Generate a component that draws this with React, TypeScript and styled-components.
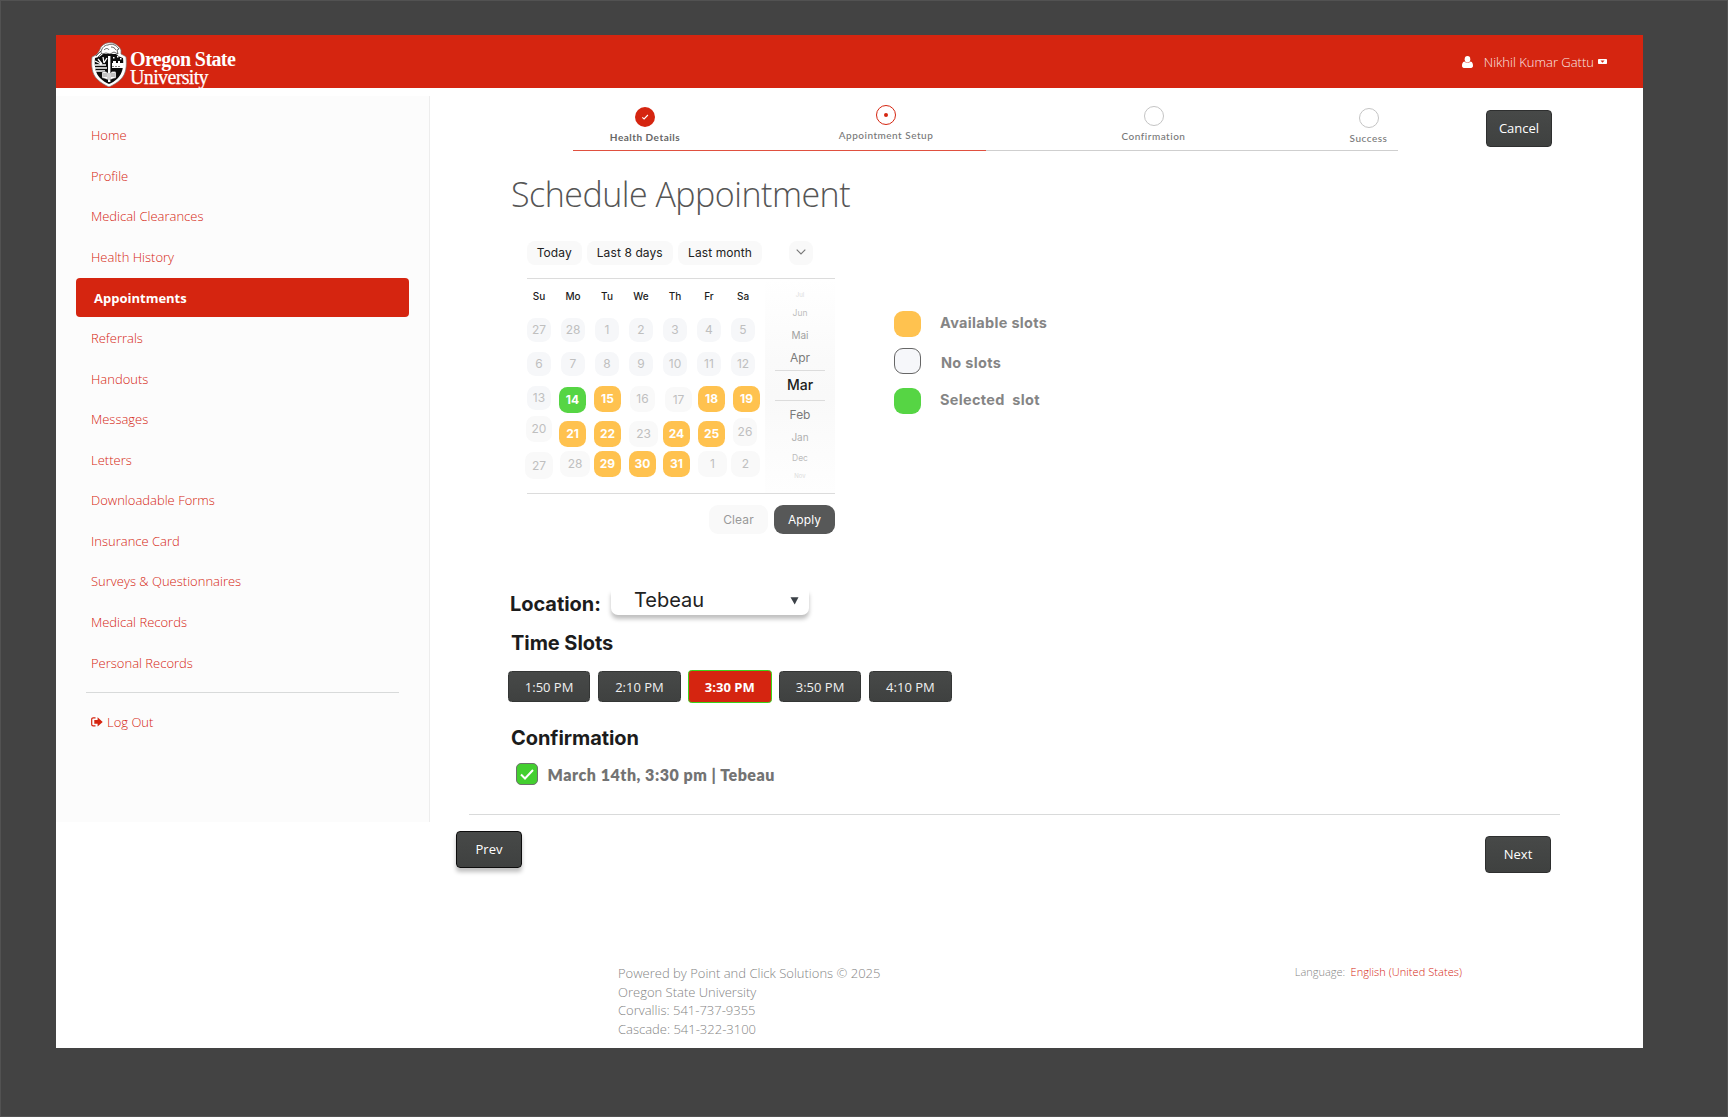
import React from "react";
import styled, { createGlobalStyle, css } from "styled-components";

const RED = "#d52510";
const OPEN = '"Open Sans", "Noto Sans", sans-serif';
const INTER = 'Inter, "Liberation Sans", sans-serif';

const GlobalStyle = createGlobalStyle`
  * { box-sizing: border-box; }
  html, body { margin: 0; padding: 0; background: #434343; }
  body { height: 1117px; overflow: hidden; font-family: ${OPEN}; }
  button { font: inherit; margin: 0; padding: 0; border: 0; }
`;

const Backdrop = styled.div`
  width: 1728px;
  height: 1117px;
  padding: 34px 84px 0 55px;
  background: #434343;
  border: 1px solid #525252;
`;

const Page = styled.div`
  width: 1587px;
  height: 1013px;
  background: #fff;
  display: flex;
  flex-direction: column;
`;

/* Header */

const Header = styled.header`
  height: 53px;
  flex: none;
  padding: 0 36px 0 35px;
  background: ${RED};
  display: flex;
  justify-content: space-between;
  align-items: flex-start;
`;

const Brand = styled.div`
  display: flex;
  padding-top: 7px;
`;

const Wordmark = styled.div`
  margin: 9px 0 -10px 3px;
  color: #fff;
  font-family: "Liberation Serif", serif;
  font-size: 20px;
  line-height: 17.5px;
  white-space: nowrap;
`;

const WordTop = styled.div`
  font-weight: 700;
  letter-spacing: -0.6px;
`;

const WordBottom = styled.div`
  letter-spacing: -0.65px;
  -webkit-text-stroke: 0.25px #fff;
`;

const User = styled.div`
  display: flex;
  align-items: center;
  height: 53px;
  color: #fff;
  font-size: 13px;
  font-weight: 300;
  white-space: nowrap;
`;

const UserName = styled.span`
  margin: 0 4px 0 11px;
  padding-top: 1px;
  opacity: 0.9;
`;

/* Sidebar */

const Body = styled.div`
  display: flex;
  flex: 1;
`;

const Sidebar = styled.aside`
  width: 374px;
  height: 726px;
  margin-top: 8px;
  padding: 19px 20px 0 20px;
  flex: none;
  background: #fcfcfc;
  border-right: 1px solid #ededed;
`;

const NavItem = styled.a<{ $active?: boolean }>`
  display: flex;
  align-items: center;
  height: 40.57px;
  padding-left: 15px;
  color: ${RED};
  font-size: 13px;
  font-weight: 300;
  white-space: nowrap;
  ${(p) =>
    p.$active &&
    css`
      height: 38.57px;
      margin: 1px 0;
      width: 333px;
      padding-left: 18px;
      background: ${RED};
      border-radius: 4px;
      color: #fff;
      font-weight: 700;
    `}
`;

const NavRule = styled.div`
  width: 313px;
  height: 1px;
  margin: 9px 0 9px 10px;
  background: #d8dada;
`;

const LogOut = styled(NavItem)`
  gap: 4px;
`;

/* Main column */

const Main = styled.main`
  flex: 1;
  display: flex;
  flex-direction: column;
`;

const TopRow = styled.div`
  display: flex;
  height: 64px;
`;

const Stepper = styled.div`
  width: 825px;
  margin-left: 143px;
  display: flex;
  flex-direction: column;
`;

const Steps = styled.div`
  display: flex;
  align-items: flex-start;
  height: 62px;
`;

const Step = styled.div<{ $gap: number; $width: number; $top: number }>`
  width: ${(p) => p.$width}px;
  margin-left: ${(p) => p.$gap}px;
  padding-top: ${(p) => p.$top}px;
  display: flex;
  flex-direction: column;
  align-items: center;
  gap: 3px;
  svg { display: block; }
`;

const StepLabel = styled.span<{ $bold?: boolean }>`
  font-family: Lato, sans-serif;
  font-size: 10px;
  line-height: 14px;
  letter-spacing: 0.5px;
  font-weight: ${(p) => (p.$bold ? 700 : 500)};
  color: ${(p) => (p.$bold ? "#666" : "#777")};
  white-space: nowrap;
`;

const Progress = styled.div`
  display: flex;
  height: 1px;
  background: #cfcfcf;
`;

const ProgressDone = styled.div`
  width: 413px;
  background: #e0503f;
`;

const DarkButton = styled.button<{ $raised?: boolean }>`
  width: 66px;
  height: 37px;
  padding-bottom: 1px;
  border: 1px solid ${(p) => (p.$raised ? "#0d0d0d" : "#2e2f2f")};
  border-radius: 4px;
  background: linear-gradient(#474948, #3f4140);
  color: #fff;
  font-size: 13px;
  box-shadow: ${(p) => (p.$raised ? "0 4px 4px rgba(0,0,0,0.25)" : "none")};
`;

const CancelButton = styled(DarkButton)`
  margin: 22px 0 0 88px;
`;

const Title = styled.h1`
  margin: 18px 0 0 81px;
  font-size: 34px;
  line-height: 48px;
  font-weight: 300;
  letter-spacing: -0.5px;
  color: #555;
  white-space: nowrap;
`;

/* Calendar */

const CalendarRow = styled.section`
  display: flex;
  height: 293px;
  margin: 23px 0 0 97px;
`;

const Calendar = styled.div`
  width: 308px;
  font-family: ${INTER};
`;

const Chips = styled.div`
  display: flex;
  gap: 5.5px;
  height: 24px;
  margin-bottom: 13px;
`;

const Chip = styled.button<{ $width: number; $push?: boolean }>`
  width: ${(p) => p.$width}px;
  margin-left: ${(p) => (p.$push ? 21 : 0)}px;
  padding-bottom: 1.5px;
  border-radius: 8px;
  background: #f9f9f9;
  color: #222;
  font-size: 12px;
  letter-spacing: 0.1px;
  display: flex;
  align-items: center;
  justify-content: center;
  white-space: nowrap;
`;

const CalendarBody = styled.div`
  display: flex;
  height: 216px;
  border-top: 1px solid #dcdcdc;
  border-bottom: 1px solid #dcdcdc;
`;

const Days = styled.div`
  width: 238px;
`;

const Weekdays = styled.div`
  display: flex;
  gap: 10px;
  padding-top: 10px;
  margin-bottom: 15px;
`;

const Weekday = styled.span`
  width: 24px;
  text-align: center;
  font-size: 10px;
  line-height: 14px;
  font-weight: 500;
  color: #1c1c1c;
`;

const Week = styled.div<{ $height: number }>`
  display: flex;
  align-items: flex-start;
  height: ${(p) => p.$height}px;
`;

type Kind = "muted" | "empty" | "open" | "picked";

const dayColors: Record<Kind, string> = {
  muted: "#f6f7f9",
  empty: "#f9f9f9",
  open: "#ffc24f",
  picked: "#56d544",
};

const Day = styled.span<{ $kind: Kind; $gap: number; $width: number; $height: number; $drop: number }>`
  flex: none;
  width: ${(p) => p.$width}px;
  height: ${(p) => p.$height}px;
  margin-left: ${(p) => p.$gap}px;
  margin-top: ${(p) => p.$drop}px;
  padding-bottom: 0.5px;
  border-radius: 8.5px;
  background: ${(p) => dayColors[p.$kind]};
  color: ${(p) => (p.$kind === "open" || p.$kind === "picked" ? "#fff" : "#bfbfbf")};
  font-weight: ${(p) => (p.$kind === "open" || p.$kind === "picked" ? 700 : 400)};
  font-size: 12px;
  display: flex;
  align-items: center;
  justify-content: center;
`;

const Months = styled.div`
  width: 70px;
  padding-top: 9px;
  display: flex;
  flex-direction: column;
  align-items: center;
  background: linear-gradient(#fff, #fafafa 38%, #f9f9f9 55%, #fefefe);
`;

const Month = styled.span<{ $size: number; $height: number; $tone: string }>`
  height: ${(p) => p.$height}px;
  line-height: ${(p) => p.$height - 1}px;
  font-size: ${(p) => p.$size}px;
  color: ${(p) => p.$tone};
`;

const CurrentMonth = styled.span`
  width: 50px;
  height: 31px;
  border-top: 1px solid #dcdcdc;
  border-bottom: 1px solid #dcdcdc;
  text-align: center;
  font-size: 14px;
  line-height: 27px;
  font-weight: 500;
  color: #1c1c1c;
`;

const CalendarActions = styled.div`
  display: flex;
  justify-content: flex-end;
  gap: 6px;
  margin-top: 11px;
`;

const ActionButton = styled.button<{ $primary?: boolean }>`
  width: ${(p) => (p.$primary ? 61 : 59)}px;
  height: 28.5px;
  border-radius: 9px;
  font-size: 12px;
  letter-spacing: 0.1px;
  background: ${(p) => (p.$primary ? "#575858" : "#f9f9f9")};
  color: ${(p) => (p.$primary ? "#fff" : "#999")};
`;

const Legend = styled.div`
  margin-left: 59px;
  padding-top: 70px;
  font-family: ${INTER};
`;

const LegendRow = styled.div<{ $height: number; $shift: number }>`
  display: flex;
  align-items: flex-start;
  gap: ${(p) => 19 + p.$shift}px;
  height: ${(p) => p.$height}px;
`;

const Swatch = styled.span<{ $color: string; $outlined?: boolean }>`
  width: 27px;
  height: 26px;
  border-radius: 9px;
  background: ${(p) => p.$color};
  border: ${(p) => (p.$outlined ? "1px solid #666" : "0")};
`;

const LegendText = styled.span<{ $top: number }>`
  padding-top: ${(p) => p.$top}px;
  font-size: 14.5px;
  line-height: 20px;
  font-weight: 700;
  letter-spacing: 0.32px;
  color: #858585;
  white-space: pre;
`;

/* Booking form */

const Form = styled.section`
  margin-left: 78px;
  padding-top: 56px;
  height: 280px;
`;

const Label = styled.h2<{ $indent: number; $bottom: number }>`
  margin: 0 0 ${(p) => p.$bottom}px ${(p) => p.$indent}px;
  font-family: ${INTER};
  font-size: 20px;
  line-height: 24px;
  font-weight: 700;
  letter-spacing: -0.06px;
  color: #1c1c1c;
  white-space: nowrap;
`;

const LocationRow = styled.div`
  display: flex;
  height: 41px;
`;

const LocationLabel = styled(Label)`
  width: 101px;
  margin-top: 2px;
`;

const Select = styled.div`
  width: 198px;
  height: 25px;
  padding: 0 10px 0 23px;
  display: flex;
  align-items: flex-start;
  justify-content: space-between;
  border-radius: 0 0 7px 7px;
  background: #fff;
  box-shadow: 0 4px 4px rgba(0, 0, 0, 0.25);
  clip-path: inset(0 -6px -10px -6px);
  font-family: ${INTER};
  font-size: 20px;
  line-height: 21px;
  color: #222;
  svg { margin-top: 7px; }
`;

const Slots = styled.div`
  display: flex;
  align-items: center;
  gap: 8.2px;
  height: 33px;
  margin-bottom: 23px;
`;

const Slot = styled.button<{ $selected?: boolean }>`
  width: 82.2px;
  height: 31px;
  border-radius: 3.5px;
  border: 1px solid #343635;
  background: linear-gradient(#474948, #3f4140);
  color: #efefef;
  font-size: 13px;
  white-space: nowrap;
  ${(p) =>
    p.$selected &&
    css`
      width: 84px;
      height: 33px;
      margin: 0 -1px;
      border-color: #3bd31a;
      background: ${RED};
      color: #fff;
      font-weight: 700;
    `}
`;

const Confirmed = styled.div`
  display: flex;
  align-items: center;
  gap: 9.5px;
  height: 22px;
  margin-left: 8px;
  font-family: Lato, sans-serif;
  font-size: 16px;
  font-weight: 800;
  letter-spacing: 0.52px;
  color: #737373;
  white-space: nowrap;
`;

const Checkbox = styled.span`
  width: 22px;
  height: 22px;
  border: 1px solid #6c736b;
  border-radius: 5px;
  background: #43cf2f;
  display: flex;
  align-items: center;
  justify-content: center;
`;

const MainRule = styled.div`
  width: 1091px;
  height: 1px;
  margin-left: 39px;
  background: #d9dada;
`;

const Pager = styled.div`
  display: flex;
  justify-content: space-between;
  align-items: flex-start;
  width: 1095px;
  margin: 16px 0 0 26px;
`;

const NextButton = styled(DarkButton)`
  margin-top: 5px;
`;

/* Footer */

const Footer = styled.footer`
  display: flex;
  justify-content: space-between;
  width: 844px;
  margin: 91px 0 0 188px;
  font-weight: 300;
  color: #858585;
  white-space: nowrap;
`;

const Address = styled.div`
  font-size: 13px;
  line-height: 18.5px;
`;

const Language = styled.div`
  font-size: 11px;
  line-height: 16px;
  a { margin-left: 2.5px; letter-spacing: 0.06px; color: ${RED}; }
`;

/* Drawings */

const Crest = () => (
  <svg width="36" height="45" viewBox="0 0 36 45">
    <path d="M3 14C6 13 8 10 10 5c3-4 8-5 12-4 3 1 6 3 8 7l0 4c2 1 4 2 5 3 1 9 0 17-5 22-4 4-8 6-12 8-4-2-8-4-12-8C1 32 0 24 1 15z" fill="#fff" stroke="#777" strokeWidth="0.7" />
    <path d="M4 16c4-1 6-2 8-4h13c2 2 4 3 7 4 1 9-1 16-5 20-3 3-6 5-9 6-3-1-6-3-9-6-4-4-6-11-5-20z" fill="#0c0c0c" />
    <path d="M10 11c0-4 3-8 7-8 4-2 8 0 11 4l-2 1 1 4-4-2-4 2-4-1-4 1z" fill="#fff" stroke="#222" strokeWidth="0.7" />
    <path d="M13 8c2-2 4-2 5 0M20 5c2 0 4 1 5 3M5 14l5-5M7 15l3-3" fill="none" stroke="#222" strokeWidth="0.7" />
    <path d="M4 23h11M4 26h12M5 29h9M7 17l4 5M12 15l1 6M4 19l6 3M16 16l-3 5" stroke="#fff" strokeWidth="1.3" />
    <path d="M17 14h2.400v26H17z" fill="#fff" />
    <path d="M21 21h12l-1 5H21zM22 19h3v3h-3zM27 19h2v3h-2z" fill="#fff" />
    <path d="M22 15h1.500v1.500H22zM26 14h1.500v1.500H26zM29 16h1.500v1.500H29z" fill="#fff" />
    <path d="M11 30c3-1 5 0 6 1v7c-2-1-4-2-6-2zM25 30c-3-1-5 0-6 1v7c2-1 4-2 6-2z" fill="#fff" stroke="#222" strokeWidth="0.4" />
    <path d="M12 32h4M12 34h4M20 32h4M20 34h4" stroke="#333" strokeWidth="0.6" />
    <path d="M22 25v-1M25 25v-1M28 25v-1" stroke="#111" strokeWidth="1" />
  </svg>
);

const UserIcon = () => (
  <svg width="11" height="12" viewBox="0 0 11 12" fill="#fff">
    <ellipse cx="5.500" cy="3.200" rx="2.800" ry="3.200" />
    <path d="M2.300 5.400c1.900 1.900 4.500 1.900 6.400 0C10.300 5.900 11 7.600 11 9.800c0 1.300-.8 2.200-1.900 2.200H1.900C.8 12 0 11.100 0 9.800c0-2.200.7-3.900 2.300-4.400z" />
  </svg>
);

const BadgeIcon = () => (
  <svg width="9" height="5" viewBox="0 0 9 5">
    <rect width="9" height="5" rx="0.800" fill="#fff" />
    <path d="M2.500 1.600h4L4.500 3.700z" fill={RED} />
  </svg>
);

const LogOutIcon = () => (
  <svg width="12" height="10" viewBox="0 0 12 10">
    <path d="M4.500.9H2.200C1.300.9.700 1.500.700 2.300v5.200c0 .8.600 1.400 1.500 1.400h2.300" fill="none" stroke={RED} strokeWidth="1.200" />
    <path d="M3.300 3h3.300V.3L11.700 4.900 6.600 9.500V6.800H3.300z" fill={RED} />
  </svg>
);

const StepIcon = ({ state }: { state: "done" | "current" | "todo" }) => (
  <svg width="20" height="20" viewBox="0 0 20 20" fill="none">
    {state === "done" && (
      <>
        <circle cx="10" cy="10" r="10" fill={RED} />
        <path d="M7.300 10.300l1.800 1.700 3.800-4" stroke="#fff" strokeWidth="1.100" />
      </>
    )}
    {state === "current" && (
      <>
        <circle cx="10" cy="10" r="9.500" stroke={RED} />
        <circle cx="10" cy="10" r="2" fill={RED} />
      </>
    )}
    {state === "todo" && <circle cx="10" cy="10" r="9.500" stroke="#c4c4c4" />}
  </svg>
);

const nav = [
  "Home", "Profile", "Medical Clearances", "Health History", "Appointments",
  "Referrals", "Handouts", "Messages", "Letters", "Downloadable Forms",
  "Insurance Card", "Surveys & Questionnaires", "Medical Records", "Personal Records",
];

type DayCell = [label: number, kind: Kind, left: number, width: number, drop: number, height: number];

const plainWeek = (labels: number[]): DayCell[] =>
  labels.map((n, i) => [n, "muted", i * 34, 24, 0, 24]);

// Each cell: label, kind, left edge in the row, width, drop from the row top, height.
const weeks: { height: number; days: DayCell[] }[] = [
  { height: 34, days: plainWeek([27, 28, 1, 2, 3, 4, 5]) },
  { height: 34, days: plainWeek([6, 7, 8, 9, 10, 11, 12]) },
  {
    height: 30,
    days: [
      [13, "muted", 0, 24, 0, 24], [14, "picked", 32, 27, 1, 26], [15, "open", 67, 27, 0, 26],
      [16, "empty", 103, 25, 0, 26], [17, "empty", 138, 27, 1, 25], [18, "open", 171, 27, 0, 26],
      [19, "open", 206, 27, 0, 26],
    ],
  },
  {
    height: 35,
    days: [
      [20, "empty", -1, 26, 0, 26], [21, "open", 32, 27, 5, 26], [22, "open", 67, 27, 5, 26],
      [23, "empty", 102, 29, 5, 26], [24, "open", 136, 27, 5, 26], [25, "open", 171, 27, 5, 26],
      [26, "empty", 206, 24, 2, 28],
    ],
  },
  {
    height: 35,
    days: [
      [27, "empty", -2, 28, 1, 27], [28, "empty", 33, 30, 0, 26], [29, "open", 67, 27, 0, 26],
      [30, "open", 102, 27, 0, 26], [31, "open", 136, 27, 0, 26], [1, "empty", 171, 29, 0, 26],
      [2, "empty", 204, 29, 0, 26],
    ],
  },
];

const gapBefore = (days: DayCell[], i: number) =>
  i === 0 ? days[0][2] : days[i][2] - days[i - 1][2] - days[i - 1][3];

export default function App() {
  return (
    <>
      <GlobalStyle />
      <Backdrop>
        <Page>
          <Header>
            <Brand>
              <Crest />
              <Wordmark>
                <WordTop>Oregon State</WordTop>
                <WordBottom>University</WordBottom>
              </Wordmark>
            </Brand>
            <User>
              <UserIcon />
              <UserName>Nikhil Kumar Gattu</UserName>
              <BadgeIcon />
            </User>
          </Header>
          <Body>
            <Sidebar>
              {nav.map((item) => (
                <NavItem key={item} $active={item === "Appointments"}>{item}</NavItem>
              ))}
              <NavRule />
              <LogOut><LogOutIcon />Log Out</LogOut>
            </Sidebar>
            <Main>
              <TopRow>
                <Stepper>
                  <Steps>
                    <Step $gap={22} $width={100} $top={19}>
                      <StepIcon state="done" /><StepLabel $bold>Health Details</StepLabel>
                    </Step>
                    <Step $gap={141} $width={100} $top={17}>
                      <StepIcon state="current" /><StepLabel>Appointment Setup</StepLabel>
                    </Step>
                    <Step $gap={167} $width={101} $top={18}>
                      <StepIcon state="todo" /><StepLabel>Confirmation</StepLabel>
                    </Step>
                    <Step $gap={136} $width={57} $top={19.5}>
                      <StepIcon state="todo" /><StepLabel>Success</StepLabel>
                    </Step>
                  </Steps>
                  <Progress><ProgressDone /></Progress>
                </Stepper>
                <CancelButton>Cancel</CancelButton>
              </TopRow>
              <Title>Schedule Appointment</Title>
              <CalendarRow>
                <Calendar>
                  <Chips>
                    <Chip $width={54.5}>Today</Chip>
                    <Chip $width={85.5}>Last 8 days</Chip>
                    <Chip $width={84}>Last month</Chip>
                    <Chip $width={24} $push>
                      <svg width="10" height="6" viewBox="0 0 10 6" fill="none">
                        <path d="M.7.7L5 5 9.300.7" stroke="#777" strokeWidth="1.100" />
                      </svg>
                    </Chip>
                  </Chips>
                  <CalendarBody>
                    <Days>
                      <Weekdays>
                        {["Su", "Mo", "Tu", "We", "Th", "Fr", "Sa"].map((d) => (
                          <Weekday key={d}>{d}</Weekday>
                        ))}
                      </Weekdays>
                      {weeks.map((week, w) => (
                        <Week key={w} $height={week.height}>
                          {week.days.map(([label, kind, , width, drop, height], i) => (
                            <Day
                              key={i}
                              $kind={kind}
                              $gap={gapBefore(week.days, i)}
                              $width={width}
                              $drop={drop}
                              $height={height}
                            >
                              {label}
                            </Day>
                          ))}
                        </Week>
                      ))}
                    </Days>
                    <Months>
                      <Month $size={6} $height={15} $tone="#dcdcdc">Jul</Month>
                      <Month $size={8.5} $height={22} $tone="#bdbdbd">Jun</Month>
                      <Month $size={10} $height={21} $tone="#a0a0a0">Mai</Month>
                      <Month $size={12} $height={24} $tone="#7a7a7a">Apr</Month>
                      <CurrentMonth>Mar</CurrentMonth>
                      <Month $size={12} $height={28} $tone="#7a7a7a">Feb</Month>
                      <Month $size={10} $height={18} $tone="#b0b0b0">Jan</Month>
                      <Month $size={8.5} $height={23} $tone="#bdbdbd">Dec</Month>
                      <Month $size={6} $height={12} $tone="#dcdcdc">Nov</Month>
                    </Months>
                  </CalendarBody>
                  <CalendarActions>
                    <ActionButton>Clear</ActionButton>
                    <ActionButton $primary>Apply</ActionButton>
                  </CalendarActions>
                </Calendar>
                <Legend>
                  <LegendRow $height={37} $shift={0}>
                    <Swatch $color="#ffc24f" />
                    <LegendText $top={2}>Available slots</LegendText>
                  </LegendRow>
                  <LegendRow $height={40} $shift={1}>
                    <Swatch $color="#f6f7fa" $outlined />
                    <LegendText $top={5}>No slots</LegendText>
                  </LegendRow>
                  <LegendRow $height={26} $shift={0}>
                    <Swatch $color="#56d544" />
                    <LegendText $top={2}>{"Selected  slot"}</LegendText>
                  </LegendRow>
                </Legend>
              </CalendarRow>
              <Form>
                <LocationRow>
                  <LocationLabel $indent={2} $bottom={0}>Location:</LocationLabel>
                  <Select>
                    Tebeau
                    <svg width="9" height="8" viewBox="0 0 9 8">
                      <path d="M.5.300h8L4.700 7.500z" fill="#3b4147" />
                    </svg>
                  </Select>
                </LocationRow>
                <Label $indent={3} $bottom={15}>Time Slots</Label>
                <Slots>
                  <Slot>1:50 PM</Slot>
                  <Slot>2:10 PM</Slot>
                  <Slot $selected>3:30 PM</Slot>
                  <Slot>3:50 PM</Slot>
                  <Slot>4:10 PM</Slot>
                </Slots>
                <Label $indent={3} $bottom={13}>Confirmation</Label>
                <Confirmed>
                  <Checkbox>
                    <svg width="14" height="11" viewBox="0 0 14 11" fill="none">
                      <path d="M1 5.500l4 4L13 1" stroke="#fff" strokeWidth="2" />
                    </svg>
                  </Checkbox>
                  March 14th, 3:30 pm | Tebeau
                </Confirmed>
              </Form>
              <MainRule />
              <Pager>
                <DarkButton $raised>Prev</DarkButton>
                <NextButton>Next</NextButton>
              </Pager>
              <Footer>
                <Address>
                  <div>Powered by Point and Click Solutions © 2025</div>
                  <div>Oregon State University</div>
                  <div>Corvallis: 541-737-9355</div>
                  <div>Cascade: 541-322-3100</div>
                </Address>
                <Language>Language: <a>English (United States)</a></Language>
              </Footer>
            </Main>
          </Body>
        </Page>
      </Backdrop>
    </>
  );
}
